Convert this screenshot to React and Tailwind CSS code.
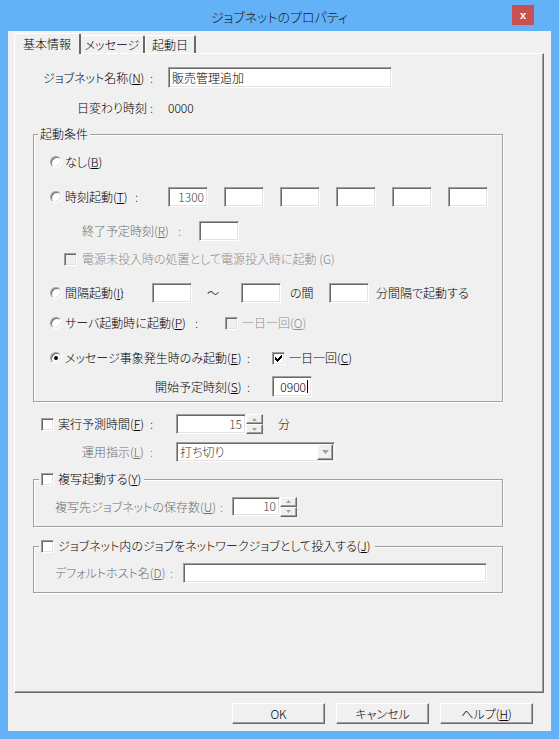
import React from "react";

const font = "font-['Noto_Sans_CJK_JP',sans-serif] [font-feature-settings:'palt'] font-light";
const sunken =
  "border border-t-[#a0a0a0] border-l-[#a0a0a0] border-r-white border-b-white shadow-[inset_1px_1px_0_#696969,inset_-1px_-1px_0_#e3e3e3]";
const raised =
  "border border-t-white border-l-white border-r-[#696969] border-b-[#696969] shadow-[inset_-1px_-1px_0_#a0a0a0]";

function Acc({ pre, k, post = ")" }) {
  return (
    <>
      {pre}
      <span className="underline underline-offset-[1px]">{k}</span>
      {post}
    </>
  );
}

function LC({ w, tw, children, gray }) {
  return (
    <div className={`flex items-center shrink-0 whitespace-nowrap ${w} ${gray ? "text-[#6d6d6d]" : "text-black"}`}>
      <span className={`shrink-0 ${tw}`}>{children}</span>
      <span>:</span>
    </div>
  );
}

function Box({ w, h = "h-[20px]", children, className = "" }) {
  return (
    <div className={`${w} ${h} ${sunken} bg-white flex items-center justify-end pr-[3px] shrink-0 ${className}`}>
      {children}
    </div>
  );
}

function Radio({ checked }) {
  return (
    <div className="w-[12px] h-[12px] rounded-full border border-t-[#a0a0a0] border-l-[#a0a0a0] border-r-white border-b-white bg-white shadow-[inset_1px_1px_0_#696969,inset_-1px_-1px_0_#e3e3e3] flex items-center justify-center shrink-0">
      {checked && <div className="w-[4px] h-[4px] rounded-full bg-black" />}
    </div>
  );
}

const checkCols = [2, 3, 4, 3, 2, 1, 0];
function Check({ checked, disabled }) {
  return (
    <div
      className={`w-[13px] h-[13px] ${sunken} ${disabled ? "bg-[#f0f0f0]" : "bg-white"} flex items-center justify-center shrink-0`}
    >
      {checked && (
        <svg width="7" height="7" viewBox="0 0 7 7" shapeRendering="crispEdges">
          {checkCols.map((y, x) => (
            <rect key={x} x={x} y={y} width="1" height="3" fill="#000" />
          ))}
        </svg>
      )}
    </div>
  );
}

function SpinBtn({ up }) {
  return (
    <div className={`h-[10px] ${raised} bg-[#f0f0f0] flex items-center justify-center`}>
      <svg width="5" height="3" viewBox="0 0 5 3">
        {up ? <path d="M2.5 0 L5 3 L0 3Z" fill="#a0a0a0" /> : <path d="M0 0 L5 0 L2.5 3Z" fill="#a0a0a0" />}
      </svg>
    </div>
  );
}

function Spin({ w, h = "h-[20px]", value }) {
  return (
    <div className="flex shrink-0">
      <Box w={w} h={h} className="text-[#404040]">
        {value}
      </Box>
      <div className="flex flex-col w-[17px] h-[20px]">
        <SpinBtn up />
        <SpinBtn />
      </div>
    </div>
  );
}

function Group({ className = "", title, children }) {
  return (
    <div
      className={`relative border border-[#a0a0a0] shadow-[inset_1px_1px_0_#fff,1px_1px_0_#fff] ${className}`}
    >
      {title}
      {children}
    </div>
  );
}

function Btn({ children }) {
  return (
    <div className={`w-[93px] h-[21px] ${raised} bg-[#f0f0f0] flex items-center justify-center text-black`}>
      {children}
    </div>
  );
}

export default function App() {
  return (
    <div className={`w-[559px] h-[739px] bg-[#63b1f6] flex flex-col text-[12px] leading-none ${font}`}>
      {/* title bar */}
      <div className="relative h-[31px] flex items-center justify-center shrink-0">
        <span className="text-[13px] text-[#1a1a1a] pt-[1px]">ジョブネットのプロパティ</span>
        <div className="absolute right-[25px] top-[5px] w-[22px] h-[20px] bg-[#c75050] flex items-center justify-center">
          <span className="text-white text-[11px] font-bold font-['Liberation_Sans',sans-serif] leading-none">x</span>
        </div>
      </div>

      {/* client */}
      <div className="mx-[8px] mb-[8px] flex-1 bg-[#f0f0f0] flex flex-col">
        {/* tabs */}
        <div className="h-[22px] flex items-end pl-[6px] shrink-0">
          <div className="relative z-10 -mb-[1px] w-[67px] h-[21px] bg-[#f0f0f0] border-t border-l border-white border-r-2 border-r-[#696969] rounded-t-[2px] flex items-center justify-center pb-[1px] text-black">
            基本情報
          </div>
          <div className="w-[64px] h-[18px] bg-[#f0f0f0] border-t border-white border-r-2 border-r-[#696969] rounded-t-[2px] flex items-center justify-center text-black">
            メッセージ
          </div>
          <div className="w-[51px] h-[18px] bg-[#f0f0f0] border-t border-l border-white border-r-2 border-r-[#696969] rounded-t-[2px] flex items-center justify-center text-black">
            起動日
          </div>
        </div>

        {/* tab page */}
        <div className={`ml-[6px] w-[530px] h-[640px] shrink-0 border border-t-white border-l-white border-r-[#696969] border-b-[#696969] shadow-[inset_-1px_-1px_0_#a0a0a0] flex flex-col pt-[13px]`}>
          {/* name */}
          <div className="flex items-center h-[21px] pl-[28px]">
            <LC w="w-[125px]" tw="w-[107px]">
              <Acc pre="ジョブネット名称(" k="N" />
            </LC>
            <Box w="w-[224px]" h="h-[21px]" className="justify-start pl-[3px] text-black">
              販売管理追加
            </Box>
          </div>
          {/* day change */}
          <div className="flex items-center h-[16px] mt-[12px] pl-[62px]">
            <LC w="w-[91px]" tw="w-[73px]">
              日変わり時刻
            </LC>
            <span className="text-black">0000</span>
          </div>

          {/* group 1 */}
          <Group
            className="mt-[18px] ml-[18px] w-[470px] h-[268px] shrink-0"
            title={
              <div className="absolute left-[4px] -top-[8px] h-[14px] px-[2px] bg-[#f0f0f0] flex items-center text-black">
                起動条件
              </div>
            }
          >
            <div className="flex flex-col pt-[17px]">
              {/* なし */}
              <div className="flex items-center h-[20px] pl-[16px]">
                <Radio />
                <span className="ml-[3px] text-black">
                  <Acc pre="なし(" k="B" />
                </span>
              </div>
              {/* 時刻起動 */}
              <div className="flex items-center h-[20px] mt-[15px] pl-[16px]">
                <Radio />
                <div className="ml-[3px]">
                  <LC w="w-[103px]" tw="w-[70px]">
                    <Acc pre="時刻起動(" k="T" />
                  </LC>
                </div>
                <div className="flex gap-[16px]">
                  <Box w="w-[40px]" className="text-[#404040]">1300</Box>
                  <Box w="w-[40px]" />
                  <Box w="w-[40px]" />
                  <Box w="w-[40px]" />
                  <Box w="w-[40px]" />
                  <Box w="w-[40px]" />
                </div>
              </div>
              {/* 終了予定 */}
              <div className="flex items-center h-[20px] mt-[14px] pl-[48px]">
                <LC w="w-[117px]" tw="w-[96px]" gray>
                  <Acc pre="終了予定時刻(" k="R" />
                </LC>
                <Box w="w-[40px]" />
              </div>
              {/* 電源 */}
              <div className="flex items-center h-[20px] mt-[8px] pl-[30px]">
                <Check disabled />
                <span className="ml-[5px] text-[#8c8c8c] whitespace-nowrap">
                  電源未投入時の処置として電源投入時に起動 (G)
                </span>
              </div>
              {/* 間隔起動 */}
              <div className="flex items-center h-[20px] mt-[14px] pl-[16px]">
                <Radio />
                <div className="ml-[3px]">
                  <LC w="w-[87px]" tw="w-[56px]">
                    <Acc pre="間隔起動(" k="I" />
                  </LC>
                </div>
                <Box w="w-[40px]" />
                <span className="ml-[15px] w-[34px] text-black">～</span>
                <Box w="w-[40px]" />
                <span className="ml-[9px] w-[39px] text-black">の間</span>
                <Box w="w-[40px]" />
                <span className="ml-[7px] text-black whitespace-nowrap">分間隔で起動する</span>
              </div>
              {/* サーバ */}
              <div className="flex items-center h-[20px] mt-[10px] pl-[16px]">
                <Radio />
                <div className="ml-[3px]">
                  <LC w="w-[160px]" tw="w-[130px]">
                    <Acc pre="サーバ起動時に起動(" k="P" />
                  </LC>
                </div>
                <Check disabled />
                <span className="ml-[4px] text-[#8c8c8c]">
                  <Acc pre="一日一回(" k="O" />
                </span>
              </div>
              {/* メッセージ */}
              <div className="flex items-center h-[20px] mt-[15px] pl-[16px]">
                <Radio checked />
                <div className="ml-[3px]">
                  <LC w="w-[207px]" tw="w-[182px]">
                    <Acc pre="メッセージ事象発生時のみ起動(" k="E" />
                  </LC>
                </div>
                <Check checked />
                <span className="ml-[4px] text-black">
                  <Acc pre="一日一回(" k="C" />
                </span>
              </div>
              {/* 開始予定 */}
              <div className="flex items-center h-[21px] mt-[8px] pl-[121px]">
                <LC w="w-[117px]" tw="w-[92px]">
                  <Acc pre="開始予定時刻(" k="S" />
                </LC>
                <Box w="w-[40px]" h="h-[21px]" className="text-black">
                  0900<span className="ml-[1px] w-[1px] h-[13px] bg-black" />
                </Box>
              </div>
            </div>
          </Group>

          {/* 実行予測時間 */}
          <div className="flex items-center h-[20px] mt-[12px] pl-[26px]">
            <Check />
            <div className="ml-[4px]">
              <LC w="w-[118px]" tw="w-[92px]">
                <Acc pre="実行予測時間(" k="F" />
              </LC>
            </div>
            <Spin w="w-[70px]" value="15" />
            <span className="ml-[15px] text-black">分</span>
          </div>
          {/* 運用指示 */}
          <div className="flex items-center h-[20px] mt-[8px] pl-[67px]">
            <LC w="w-[94px]" tw="w-[68px]" gray>
              <Acc pre="運用指示(" k="L" />
            </LC>
            <div className={`w-[159px] h-[20px] ${sunken} bg-white flex items-center justify-between pl-[3px] pr-[1px] shrink-0`}>
              <span className="text-[#303030]">打ち切り</span>
              <div className={`w-[16px] h-[16px] ${raised} bg-[#f0f0f0] flex items-center justify-center`}>
                <svg width="7" height="4" viewBox="0 0 7 4">
                  <path d="M0 0 L7 0 L3.5 4Z" fill="#a0a0a0" />
                </svg>
              </div>
            </div>
          </div>

          {/* group 2 */}
          <Group
            className="mt-[17px] ml-[18px] w-[470px] h-[48px] shrink-0"
            title={
              <div className="absolute left-[5px] -top-[8px] h-[14px] pl-[2px] pr-[3px] bg-[#f0f0f0] flex items-center text-black">
                <Check />
                <span className="ml-[4px]">
                  <Acc pre="複写起動する(" k="Y" />
                </span>
              </div>
            }
          >
            <div className="flex items-center h-[19px] mt-[17px] pl-[21px]">
              <LC w="w-[177px]" tw="w-[165px]" gray>
                <Acc pre="複写先ジョブネットの保存数(" k="U" />
              </LC>
              <Spin w="w-[48px]" h="h-[19px]" value="10" />
            </div>
          </Group>

          {/* group 3 */}
          <Group
            className="mt-[19px] ml-[18px] w-[470px] h-[47px] shrink-0"
            title={
              <div className="absolute left-[5px] -top-[8px] h-[14px] pl-[2px] pr-[4px] bg-[#f0f0f0] flex items-center text-black whitespace-nowrap">
                <Check />
                <span className="ml-[4px]">
                  <Acc pre="ジョブネット内のジョブをネットワークジョブとして投入する(" k="J" />
                </span>
              </div>
            }
          >
            <div className="flex items-center h-[20px] mt-[16px] pl-[21px]">
              <LC w="w-[128px]" tw="w-[115px]" gray>
                <Acc pre="デフォルトホスト名(" k="D" />
              </LC>
              <Box w="w-[304px]" />
            </div>
          </Group>
        </div>

        {/* buttons */}
        <div className="flex justify-end gap-[11px] pr-[18px] mt-[10px]">
          <Btn>OK</Btn>
          <Btn>キャンセル</Btn>
          <Btn>
            <Acc pre="ヘルプ(" k="H" />
          </Btn>
        </div>
      </div>
    </div>
  );
}
